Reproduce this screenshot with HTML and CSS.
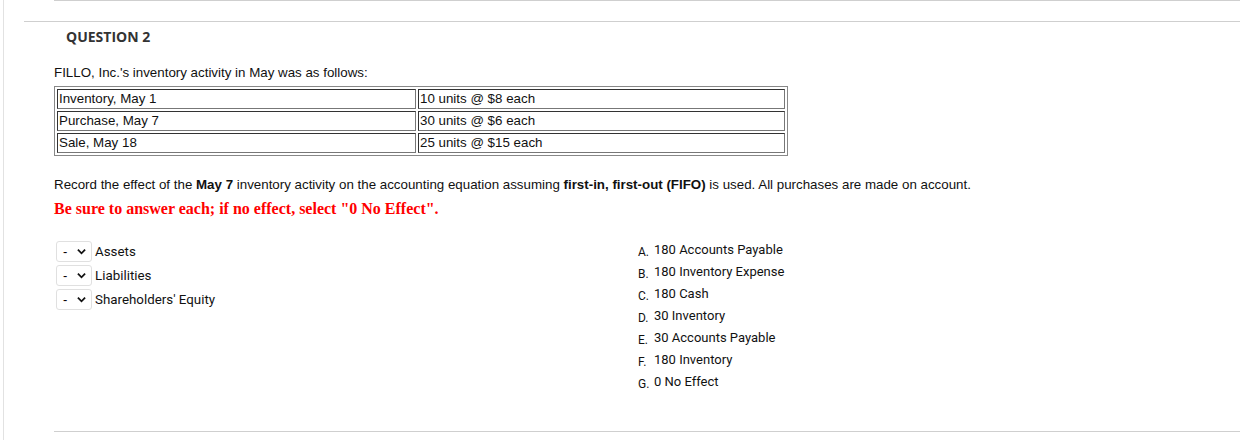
FILE: index.html
```html
<!DOCTYPE html>
<html>
<head>
<meta charset="utf-8">
<link rel="stylesheet" href="styles.css">
</head>
<body>
<div class="page">
  <div class="prev-rule"></div>
  <div class="question">
    <div class="q-head">QUESTION 2</div>
    <div class="q-body">
      <p class="intro">FILLO, Inc.'s inventory activity in May was as follows:</p>
      <table class="data">
        <tr><td class="c1">Inventory, May 1</td><td class="c2">10 units @ $8 each</td></tr>
        <tr><td class="c1">Purchase, May 7</td><td class="c2">30 units @ $6 each</td></tr>
        <tr><td class="c1">Sale, May 18</td><td class="c2">25 units @ $15 each</td></tr>
      </table>
      <p class="record">Record the effect of the <b>May 7</b> inventory activity on the accounting equation assuming <b>first-in, first-out (FIFO)</b> is used. All purchases are made on account.</p>
      <p class="warn">Be sure to answer each; if no effect, select "0 No Effect".</p>
      <div class="match">
        <div class="left">
          <div class="row"><span class="sel"><span class="dash">-</span><svg class="chev" viewBox="0 0 10 7" width="9" height="7"><path d="M1 1.5 L5 5.5 L9 1.5" fill="none" stroke="#111" stroke-width="2"/></svg></span><span class="lbl">Assets</span></div>
          <div class="row"><span class="sel"><span class="dash">-</span><svg class="chev" viewBox="0 0 10 7" width="9" height="7"><path d="M1 1.5 L5 5.5 L9 1.5" fill="none" stroke="#111" stroke-width="2"/></svg></span><span class="lbl">Liabilities</span></div>
          <div class="row"><span class="sel"><span class="dash">-</span><svg class="chev" viewBox="0 0 10 7" width="9" height="7"><path d="M1 1.5 L5 5.5 L9 1.5" fill="none" stroke="#111" stroke-width="2"/></svg></span><span class="lbl">Shareholders' Equity</span></div>
        </div>
        <div class="right">
          <div class="opt"><span class="let">A.</span><span class="otxt">180 Accounts Payable</span></div>
          <div class="opt"><span class="let">B.</span><span class="otxt">180 Inventory Expense</span></div>
          <div class="opt"><span class="let">C.</span><span class="otxt">180 Cash</span></div>
          <div class="opt"><span class="let">D.</span><span class="otxt">30 Inventory</span></div>
          <div class="opt"><span class="let">E.</span><span class="otxt">30 Accounts Payable</span></div>
          <div class="opt"><span class="let">F.</span><span class="otxt">180 Inventory</span></div>
          <div class="opt"><span class="let">G.</span><span class="otxt">0 No Effect</span></div>
        </div>
      </div>
    </div>
  </div>
  <div class="bottom-rule"></div>
</div>
</body>
</html>
```
FILE: styles.css
```css
html, body {
  margin: 0;
  padding: 0;
  background: #fff;
}
body {
  font-family: "Liberation Sans", Arial, sans-serif;
  color: #000;
  overflow: hidden;
}
.page {
  margin-left: 3px;
  border-left: 1px solid #e2e2e2;
  height: 440px;
  box-sizing: border-box;
}
.prev-rule {
  margin-left: 50px;
  border-top: 1px solid #cfcfcf;
  height: 20px;
}
.question {
  margin-left: 20px;
  border-top: 1px solid #cfcfcf;
  height: 409px;
}
.q-head {
  font-family: "Open Sans", sans-serif;
  font-weight: 700;
  font-size: 14px;
  color: #333;
  margin: 6px 0 0 42px;
  line-height: 17px;
}
.q-body {
  padding-left: 30px;
}
.intro {
  font-size: 13.333px;
  margin: 20px 0 0 0;
  line-height: 16px;
  color: #111;
}
.data {
  margin-top: 5px;
  border: 1px solid #888;
  border-spacing: 2px;
  font-size: 13.333px;
  color: #111;
}
.data td {
  border: 1px solid #333;
  border-right-color: #777;
  border-bottom-color: #777;
  padding: 0 1px;
  height: 18px;
  line-height: 18px;
}
.c1 { width: 355px; }
.c2 { width: 363px; }
.record {
  font-size: 13.333px;
  margin: 21px 0 0 0;
  line-height: 16px;
  color: #111;
}
.warn {
  font-family: "Liberation Serif", "Times New Roman", serif;
  font-weight: 700;
  font-size: 16px;
  color: #f00;
  margin: 7px 0 0 0;
  line-height: 18px;
}
.match {
  display: flex;
  margin-top: 18px;
}
.left {
  width: 582px;
  padding-left: 2px;
  padding-top: 4px;
}
.row {
  display: flex;
  align-items: center;
  height: 22px;
  margin-bottom: 2px;
}
.sel {
  width: 36px;
  height: 21px;
  box-sizing: border-box;
  border: 1px solid #e0e0e0;
  border-radius: 3px;
  display: flex;
  align-items: center;
  justify-content: space-between;
  padding: 0 5px 0 6px;
  font-size: 13px;
  margin-right: 3px;
}
.dash { line-height: 1; }
.lbl {
  font-family: "Roboto", "Liberation Sans", sans-serif;
  font-size: 13.333px;
  color: #111;
}
.right {
  display: flex;
  flex-direction: column;
  padding-top: 6px;
}
.opt {
  display: flex;
  align-items: baseline;
  height: 22px;
  font-family: "Roboto", "Liberation Sans", sans-serif;
  color: #111;
}
.let {
  font-size: 12px;
  width: 16px;
  position: relative;
  top: 2px;
}
.otxt {
  font-size: 13px;
}
.bottom-rule {
  margin-left: 50px;
  border-top: 1px solid #cfcfcf;
}
```
